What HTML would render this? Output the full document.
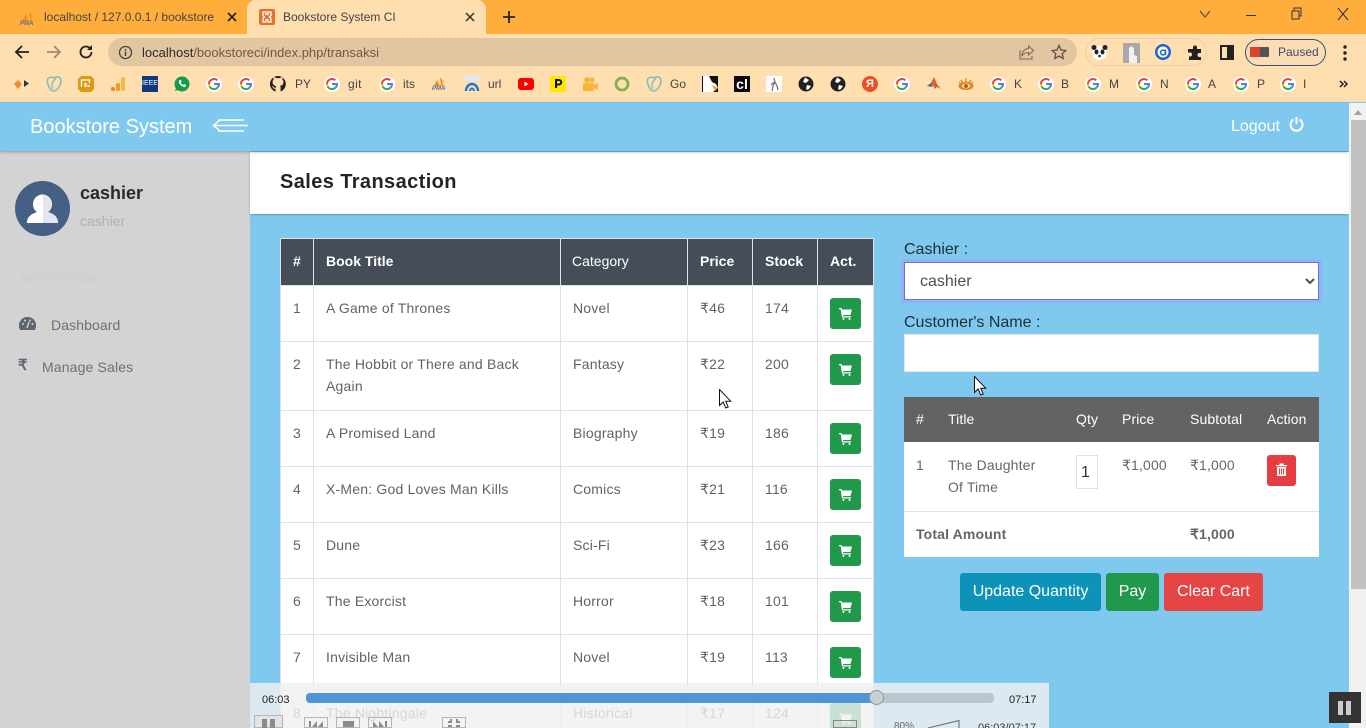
<!DOCTYPE html>
<html><head><meta charset="utf-8"><title>Bookstore System CI</title>
<style>
html,body{margin:0;padding:0;width:1366px;height:728px;overflow:hidden;background:#80c9ee;font-family:"Liberation Sans",Arial,sans-serif;font-size:14px;color:#555}
*{box-sizing:border-box}
#root{position:absolute;left:0;top:0;width:1366px;height:728px;overflow:hidden}
.a{position:absolute}
svg{display:block}
.bm{position:absolute;top:76px;width:16px;height:16px}
.bt{position:absolute;top:77px;font-size:12px;line-height:14px;color:#444}
table{border-collapse:collapse;table-layout:fixed}
#t1{position:absolute;left:280px;top:238px;width:593px;background:#fff}
#t1 th{background:#454d58;color:#fff;border:1px solid #dee2e6;height:47px;padding:0 12px 2px;text-align:left;font-size:14px;line-height:20px}
#t1 th.n{font-weight:normal;padding-left:11px}
#t1 td{border:1px solid #dee2e6;padding:11px 12px 0;vertical-align:top;line-height:22px;color:#5f6368;height:56px;letter-spacing:.2px}
#t1 tr.tall td{height:69px}
.cart{position:absolute;width:31px;height:31px;border-radius:3px;background:#20994b;left:830px}
.cart svg{margin:9px 0 0 9px}
#t2{position:absolute;left:904px;top:397px;width:415px;background:#fff}
#t2 th{background:#636363;color:#fff;font-weight:normal;text-align:left;height:45px;padding:0 0 2px 12px;font-size:14px;letter-spacing:.1px}
#t2 td{padding:12px 0 0 12px;vertical-align:top;line-height:22px;color:#666;letter-spacing:.15px}
.btn{position:absolute;top:573px;height:38px;border-radius:3px;color:#fff;font-size:16px;line-height:38px;text-align:center}
.pc{position:absolute;top:717px;width:24px;height:11px;border:1px solid #b5b5b5}
</style></head><body><div id="root">

<!-- tab strip -->
<div class="a" style="left:0;top:0;width:1366px;height:34px;background:#ffad3b"></div>
<svg class="a" style="left:20px;top:11px" width="17" height="11" viewBox="0 0 17 11"><path d="M9 0l1.500 10h5zM6 3L2 10h6zM11 2l4 8h-3z" fill="#f29111"/></svg>
<div class="a" style="left:20px;top:21px;font-size:6px;line-height:6px;font-weight:bold;font-style:italic;color:#5c6a94">PMA</div>
<div class="a" style="left:44px;top:10px;font-size:12px;line-height:14px;color:#444;width:172px;white-space:nowrap;overflow:hidden">localhost / 127.0.0.1 / bookstore</div>
<svg class="a" style="left:227px;top:12px" width="10" height="10" viewBox="0 0 10 10"><path d="M1 1l8 8M9 1l-8 8" stroke="#222" stroke-width="1.600"/></svg>
<div class="a" style="left:247px;top:0;width:239px;height:34px;background:#ffdeb0;border-radius:9px 9px 0 0"></div>
<svg class="a" style="left:259px;top:9px" width="16" height="16" viewBox="0 0 16 16"><rect width="16" height="16" rx="2" fill="#e8702a"/><path d="M4 3h3v2.500h2V3h3v3.500L10.500 8 12 9.500V13H9v-2.500H7V13H4V9.500L5.500 8 4 6.500z" fill="none" stroke="#fff" stroke-width="1.300"/></svg>
<div class="a" style="left:283px;top:10px;font-size:12px;line-height:14px;color:#444">Bookstore System CI</div>
<svg class="a" style="left:465px;top:12px" width="10" height="10" viewBox="0 0 10 10"><path d="M1 1l8 8M9 1l-8 8" stroke="#333" stroke-width="1.500"/></svg>
<svg class="a" style="left:503px;top:11px" width="12" height="12" viewBox="0 0 12 12"><path d="M6 0v12M0 6h12" stroke="#222" stroke-width="1.800"/></svg>
<svg class="a" style="left:1199px;top:10px" width="12" height="8" viewBox="0 0 12 8"><path d="M1 1l5 6 5-6" fill="none" stroke="#444"/></svg>
<svg class="a" style="left:1246px;top:7px" width="110" height="14" viewBox="0 0 110 14"><path d="M0 8.500h10" stroke="#333"/><path d="M46 4h7v8h-7zM48 4V1h7v8h-2" fill="none" stroke="#333"/><path d="M92 1l10 12M102 1L92 13" stroke="#333"/></svg>

<!-- toolbar -->
<div class="a" style="left:0;top:34px;width:1366px;height:68px;background:#ffdeb0"></div>
<svg class="a" style="left:13px;top:44px" width="18" height="16" viewBox="0 0 18 16"><path d="M16 8H3M9 2L3 8l6 6" fill="none" stroke="#222" stroke-width="1.800"/></svg>
<svg class="a" style="left:45px;top:44px" width="18" height="16" viewBox="0 0 18 16"><path d="M2 8h13M9 2l6 6-6 6" fill="none" stroke="#a08a70" stroke-width="1.800"/></svg>
<svg class="a" style="left:78px;top:44px" width="16" height="16" viewBox="0 0 16 16"><path d="M13.500 8A5.500 5.500 0 1 1 12 4.200" fill="none" stroke="#222" stroke-width="1.800"/><path d="M14 1v5H9z" fill="#222"/></svg>
<div class="a" style="left:108px;top:38px;width:969px;height:28px;border-radius:14px;background:#e2c6a2"></div>
<svg class="a" style="left:118px;top:45px" width="15" height="15" viewBox="0 0 15 15"><circle cx="7.500" cy="7.500" r="6" fill="none" stroke="#444" stroke-width="1.300"/><path d="M7.500 6.500v4.500M7.500 4v1.500" stroke="#444" stroke-width="1.500"/></svg>
<div class="a" style="left:142px;top:45px;font-size:13px;line-height:15px;color:#6b5a45;white-space:nowrap"><span style="color:#2b2b2b">localhost</span>/bookstoreci/index.php/transaksi</div>
<svg class="a" style="left:1019px;top:44px" width="16" height="16" viewBox="0 0 16 16"><path d="M9.500 2l5 4.500-5 4.500V8.500C6 8.500 4 10 3 12c0-4 2-7 6.500-7.500zM1 6v9h12v-3" fill="none" stroke="#7a6a58" stroke-width="1.100"/></svg>
<svg class="a" style="left:1051px;top:44px" width="16" height="16" viewBox="0 0 16 16"><path d="M8 1.500l2 4.500 4.800.5-3.600 3.200 1 4.800L8 12.100l-4.200 2.400 1-4.800L1.200 6.500 6 6z" fill="none" stroke="#5a4f44" stroke-width="1.300"/></svg>
<div class="a" style="left:1085px;top:38px;width:122px;height:28px;border-radius:14px;border:1px solid #f0cfa0"></div>
<svg class="a" style="left:1091px;top:44px" width="17" height="17" viewBox="0 0 17 17"><circle cx="8.500" cy="9" r="7" fill="#fff"/><circle cx="3" cy="3.500" r="2.500" fill="#222"/><circle cx="14" cy="3.500" r="2.500" fill="#222"/><ellipse cx="5.500" cy="8" rx="2" ry="2.500" fill="#222"/><ellipse cx="11.500" cy="8" rx="2" ry="2.500" fill="#222"/><circle cx="8.500" cy="12" r="1.300" fill="#222"/></svg>
<svg class="a" style="left:1123px;top:43px" width="17" height="20" viewBox="0 0 17 20"><rect width="17" height="20" fill="#a8a8a8"/><path d="M6 20V6a2.500 2.500 0 0 1 5 0v6l3 1v7z" fill="#f2f2f5"/></svg>
<svg class="a" style="left:1155px;top:44px" width="16" height="16" viewBox="0 0 16 16"><circle cx="8" cy="8" r="8" fill="#1d66d6"/><circle cx="8" cy="8" r="5.500" fill="#fff"/><circle cx="8" cy="8.500" r="2.400" fill="none" stroke="#1d66d6" stroke-width="1.500"/><path d="M10.500 5.500v5.500" stroke="#1d66d6" stroke-width="1.500"/></svg>
<svg class="a" style="left:1187px;top:45px" width="16" height="16" viewBox="0 0 16 16"><path d="M6 2.500a2 2 0 0 1 4 0V4h4v4h-1.500a2 2 0 0 0 0 4H14v3H2v-3.500h1a2 2 0 0 0 0-4H1V4h5z" fill="#222"/></svg>
<svg class="a" style="left:1220px;top:45px" width="14" height="15" viewBox="0 0 14 15"><rect x="1" y="1" width="12" height="13" fill="none" stroke="#222" stroke-width="2"/><rect x="7" y="1" width="6" height="13" fill="#222"/></svg>
<div class="a" style="left:1245px;top:39px;width:81px;height:27px;border-radius:14px;border:1px solid #34507c;background:#fcdcb2"></div>
<div class="a" style="left:1250px;top:47px;width:19px;height:10px;background:#555;border-radius:1px"><div style="width:10px;height:10px;background:#d9442f"></div></div>
<div class="a" style="left:1278px;top:45px;font-size:12px;line-height:14px;color:#3a4d74">Paused</div>
<svg class="a" style="left:1343px;top:45px" width="4" height="16" viewBox="0 0 4 16"><circle cx="2" cy="2" r="1.700" fill="#222"/><circle cx="2" cy="8" r="1.700" fill="#222"/><circle cx="2" cy="14" r="1.700" fill="#222"/></svg>

<!-- bookmarks -->
<svg class="bm" style="left:14px" viewBox="0 0 16 16"><path d="M0 8l4-4 4 4-4 5z" fill="#f28a30"/><path d="M10 4l5 3.500-5 3.500z" fill="#1f3a44"/></svg>
<svg class="bm" style="left:46px" viewBox="0 0 16 16"><path d="M8 2C6 1 3.500 1 2 2.500 .5 5 2 11 5 14c1 1 2 1 3 1 4-1 7-6 7-10 0-2-1-3.500-3-4-1.500-.3-3 .3-4 1z" fill="none" stroke="#7fbcc0" stroke-width="1.500"/><path d="M10 3C6 5 5 9 7 13" fill="none" stroke="#7fbcc0" stroke-width="1.300"/></svg>
<svg class="bm" style="left:78px" viewBox="0 0 16 16"><path d="M3 0h10l3 3v10l-3 3H3l-3-3V3z" fill="#e09a12"/><path d="M3.500 11V4h8v3" fill="none" stroke="#fff" stroke-width="1.300"/><path d="M6.500 7h2v4h-2zM9.500 9h2v2h-2z" fill="#fff"/></svg>
<svg class="bm" style="left:110px" viewBox="0 0 16 16"><rect x="1" y="11" width="4" height="4" rx="1.500" fill="#ee8a22"/><rect x="6" y="7" width="4" height="8" rx="1.500" fill="#f39a28"/><rect x="11" y="1" width="4" height="14" rx="1.500" fill="#f9b83a"/></svg>
<div class="bm" style="left:142px;background:#10387f;color:#fff;font-size:7px;line-height:16px;text-align:center">IEEE</div>
<svg class="bm" style="left:174px" viewBox="0 0 16 16"><circle cx="8" cy="8" r="7.500" fill="#0f9d47"/><path d="M1 15l1.500-4.500 3 3z" fill="#0f9d47"/><path d="M5 4.500c-1 3 3 7 6.500 6.500l.5-2-2-1-1 1C8 8.500 7 7.500 6.800 6.500l1-.8-1-2z" fill="#fff"/></svg>
<svg class="bm" style="left:206px" viewBox="0 0 16 16"><circle cx="8" cy="8" r="8" fill="#fff"/><path d="M3 8a5 5 0 0 1 8.300-3.700" fill="none" stroke="#e94235" stroke-width="2"/><path d="M3 8a5 5 0 0 0 .6 2.400" fill="none" stroke="#fabb05" stroke-width="2"/><path d="M3.600 10.400a5 5 0 0 0 8 1.200" fill="none" stroke="#34a853" stroke-width="2"/><path d="M11.600 11.600A5 5 0 0 0 13 8H8" fill="none" stroke="#4285f4" stroke-width="2"/></svg>
<svg class="bm" style="left:238px" viewBox="0 0 16 16"><circle cx="8" cy="8" r="8" fill="#fff"/><path d="M3 8a5 5 0 0 1 8.300-3.700" fill="none" stroke="#e94235" stroke-width="2"/><path d="M3 8a5 5 0 0 0 .6 2.400" fill="none" stroke="#fabb05" stroke-width="2"/><path d="M3.600 10.400a5 5 0 0 0 8 1.200" fill="none" stroke="#34a853" stroke-width="2"/><path d="M11.600 11.600A5 5 0 0 0 13 8H8" fill="none" stroke="#4285f4" stroke-width="2"/></svg>
<svg class="bm" style="left:270px" viewBox="0 0 16 16"><path d="M8 0a8 8 0 0 0-2.500 15.600v-2.800c-2 .4-2.500-1-2.700-1.500-.3-.6-1-1-.4-1.200 1-.1 1.500 1 1.700 1.300 1 1.200 2 .8 1.500.4 0-.7.400-1.200.7-1.500C3.800 9.500 2.600 8.500 2.600 6c0-1 .4-2 1-2.500-.1-.3-.4-1.300.1-2.500 0 0 1 0 2.500 1.200a8 8 0 0 1 3.600 0C11.300 1 12.300 1 12.300 1c.5 1.200.2 2.200.1 2.500.6.600 1 1.500 1 2.500 0 2.500-1.300 3.500-3.500 3.800.4.300.7.900.7 1.800v3.900A8 8 0 0 0 8 0z" fill="#222"/></svg>
<div class="bt" style="left:295px">PY</div>
<svg class="bm" style="left:324px" viewBox="0 0 16 16"><circle cx="8" cy="8" r="8" fill="#fff"/><path d="M3 8a5 5 0 0 1 8.300-3.700" fill="none" stroke="#e94235" stroke-width="2"/><path d="M3 8a5 5 0 0 0 .6 2.400" fill="none" stroke="#fabb05" stroke-width="2"/><path d="M3.600 10.400a5 5 0 0 0 8 1.200" fill="none" stroke="#34a853" stroke-width="2"/><path d="M11.600 11.600A5 5 0 0 0 13 8H8" fill="none" stroke="#4285f4" stroke-width="2"/></svg>
<div class="bt" style="left:348px;letter-spacing:.4px">git</div>
<svg class="bm" style="left:379px" viewBox="0 0 16 16"><circle cx="8" cy="8" r="8" fill="#fff"/><path d="M3 8a5 5 0 0 1 8.300-3.700" fill="none" stroke="#e94235" stroke-width="2"/><path d="M3 8a5 5 0 0 0 .6 2.400" fill="none" stroke="#fabb05" stroke-width="2"/><path d="M3.600 10.400a5 5 0 0 0 8 1.200" fill="none" stroke="#34a853" stroke-width="2"/><path d="M11.600 11.600A5 5 0 0 0 13 8H8" fill="none" stroke="#4285f4" stroke-width="2"/></svg>
<div class="bt" style="left:403px">its</div>
<svg class="bm" style="left:432px" viewBox="0 0 16 16"><path d="M8 1l1 9h5zM5 4l-3 6h6zM10 3l4 7h-3z" fill="#f29111"/></svg>
<div class="a" style="left:432px;top:86px;font-size:6px;line-height:6px;font-weight:bold;font-style:italic;color:#5c6a94">PMA</div>
<svg class="bm" style="left:464px" viewBox="0 0 16 16"><rect width="16" height="5" fill="#e3e8ee"/><path d="M2 15a6 7 0 0 1 12 0" fill="none" stroke="#1d78d6" stroke-width="2.500"/><path d="M6 15a2 2.500 0 0 1 4 0" fill="none" stroke="#1d78d6" stroke-width="2"/></svg>
<div class="bt" style="left:488px">url</div>
<svg class="bm" style="left:518px" viewBox="0 0 16 16"><rect x="0" y="2" width="16" height="12" rx="3" fill="#f00"/><path d="M6.500 5.500v5l4-2.500z" fill="#fff"/></svg>
<svg class="bm" style="left:550px" viewBox="0 0 16 16"><rect width="16" height="16" fill="#ffe600"/><path d="M6 12V4h3a2 2 0 0 1 0 4.500H6" fill="none" stroke="#111" stroke-width="2"/></svg>
<svg class="bm" style="left:582px" viewBox="0 0 16 16"><circle cx="5" cy="4" r="3" fill="#f5b73a"/><circle cx="10" cy="4" r="2.500" fill="#f5b73a"/><rect x="1" y="7" width="11" height="8" rx="1" fill="#f5b73a"/><path d="M12 9l4-2v7l-4-2z" fill="#f5b73a"/></svg>
<svg class="bm" style="left:614px" viewBox="0 0 16 16"><circle cx="8" cy="8" r="6" fill="none" stroke="#7fb24a" stroke-width="2.800"/></svg>
<svg class="bm" style="left:646px" viewBox="0 0 16 16"><path d="M8 2C6 1 3.500 1 2 2.500 .5 5 2 11 5 14c1 1 2 1 3 1 4-1 7-6 7-10 0-2-1-3.500-3-4-1.500-.3-3 .3-4 1z" fill="none" stroke="#7fbcc0" stroke-width="1.500"/><path d="M10 3C6 5 5 9 7 13" fill="none" stroke="#7fbcc0" stroke-width="1.300"/></svg>
<div class="bt" style="left:670px">Go</div>
<svg class="bm" style="left:702px" viewBox="0 0 16 16"><rect width="16" height="16" fill="#111"/><path d="M1 0h6l3 6 4 2 2 4-5 4H1z" fill="#fff"/><path d="M10 9l6 3-3 3z" fill="#e8a020"/></svg>
<div class="bm" style="left:734px;background:#0a0a0a;color:#fff;font-size:14px;font-weight:bold;line-height:16px;text-align:center">cl</div>
<svg class="bm" style="left:766px" viewBox="0 0 16 16"><rect width="16" height="16" fill="#fff"/><path d="M8 2l1 4-2 4-1 5M9 6l2 4 1 4M8 6l-3 3" fill="none" stroke="#777" stroke-width="1.300"/></svg>
<svg class="bm" style="left:798px" viewBox="0 0 16 16"><circle cx="8" cy="8" r="7.500" fill="#222"/><path d="M7 1.500L11 4 8 7 5 6zM9 9l4 1-3 4-2-1z" fill="#fff"/></svg>
<svg class="bm" style="left:830px" viewBox="0 0 16 16"><circle cx="8" cy="8" r="7.500" fill="#222"/><path d="M7 1.500L11 4 8 7 5 6zM9 9l4 1-3 4-2-1z" fill="#fff"/></svg>
<div class="bm" style="left:862px;background:#f04e23;border-radius:50%;color:#fff;font-size:11px;font-weight:bold;line-height:16px;text-align:center">Я</div>
<svg class="bm" style="left:894px" viewBox="0 0 16 16"><circle cx="8" cy="8" r="8" fill="#fff"/><path d="M3 8a5 5 0 0 1 8.300-3.700" fill="none" stroke="#e94235" stroke-width="2"/><path d="M3 8a5 5 0 0 0 .6 2.400" fill="none" stroke="#fabb05" stroke-width="2"/><path d="M3.600 10.400a5 5 0 0 0 8 1.200" fill="none" stroke="#34a853" stroke-width="2"/><path d="M11.600 11.600A5 5 0 0 0 13 8H8" fill="none" stroke="#4285f4" stroke-width="2"/></svg>
<svg class="bm" style="left:926px" viewBox="0 0 16 16"><path d="M1 10l4-3 3-6 3 7 4 5-4-2-2 2-2-4z" fill="#d9622b"/><path d="M1 10l4-3 2 4z" fill="#3b6ea5"/></svg>
<svg class="bm" style="left:958px" viewBox="0 0 16 16"><ellipse cx="8" cy="10" rx="7.500" ry="4" fill="#e0851f"/><ellipse cx="8" cy="10" rx="4" ry="2.500" fill="#ffdeb0"/><circle cx="8" cy="10" r="2" fill="#c0581a"/><path d="M3 4l2 3M8 2v4M13 4l-2 3M1 6l2 2M15 6l-2 2" stroke="#e0851f" stroke-width="1.300"/></svg>
<svg class="bm" style="left:990px" viewBox="0 0 16 16"><circle cx="8" cy="8" r="8" fill="#fff"/><path d="M3 8a5 5 0 0 1 8.300-3.700" fill="none" stroke="#e94235" stroke-width="2"/><path d="M3 8a5 5 0 0 0 .6 2.400" fill="none" stroke="#fabb05" stroke-width="2"/><path d="M3.600 10.400a5 5 0 0 0 8 1.200" fill="none" stroke="#34a853" stroke-width="2"/><path d="M11.600 11.600A5 5 0 0 0 13 8H8" fill="none" stroke="#4285f4" stroke-width="2"/></svg>
<div class="bt" style="left:1014px">K</div>
<svg class="bm" style="left:1038px" viewBox="0 0 16 16"><circle cx="8" cy="8" r="8" fill="#fff"/><path d="M3 8a5 5 0 0 1 8.300-3.700" fill="none" stroke="#e94235" stroke-width="2"/><path d="M3 8a5 5 0 0 0 .6 2.400" fill="none" stroke="#fabb05" stroke-width="2"/><path d="M3.600 10.400a5 5 0 0 0 8 1.200" fill="none" stroke="#34a853" stroke-width="2"/><path d="M11.600 11.600A5 5 0 0 0 13 8H8" fill="none" stroke="#4285f4" stroke-width="2"/></svg>
<div class="bt" style="left:1061px">B</div>
<svg class="bm" style="left:1085px" viewBox="0 0 16 16"><circle cx="8" cy="8" r="8" fill="#fff"/><path d="M3 8a5 5 0 0 1 8.300-3.700" fill="none" stroke="#e94235" stroke-width="2"/><path d="M3 8a5 5 0 0 0 .6 2.400" fill="none" stroke="#fabb05" stroke-width="2"/><path d="M3.600 10.400a5 5 0 0 0 8 1.200" fill="none" stroke="#34a853" stroke-width="2"/><path d="M11.600 11.600A5 5 0 0 0 13 8H8" fill="none" stroke="#4285f4" stroke-width="2"/></svg>
<div class="bt" style="left:1109px">M</div>
<svg class="bm" style="left:1136px" viewBox="0 0 16 16"><circle cx="8" cy="8" r="8" fill="#fff"/><path d="M3 8a5 5 0 0 1 8.300-3.700" fill="none" stroke="#e94235" stroke-width="2"/><path d="M3 8a5 5 0 0 0 .6 2.400" fill="none" stroke="#fabb05" stroke-width="2"/><path d="M3.600 10.400a5 5 0 0 0 8 1.200" fill="none" stroke="#34a853" stroke-width="2"/><path d="M11.600 11.600A5 5 0 0 0 13 8H8" fill="none" stroke="#4285f4" stroke-width="2"/></svg>
<div class="bt" style="left:1160px">N</div>
<svg class="bm" style="left:1185px" viewBox="0 0 16 16"><circle cx="8" cy="8" r="8" fill="#fff"/><path d="M3 8a5 5 0 0 1 8.300-3.700" fill="none" stroke="#e94235" stroke-width="2"/><path d="M3 8a5 5 0 0 0 .6 2.400" fill="none" stroke="#fabb05" stroke-width="2"/><path d="M3.600 10.400a5 5 0 0 0 8 1.200" fill="none" stroke="#34a853" stroke-width="2"/><path d="M11.600 11.600A5 5 0 0 0 13 8H8" fill="none" stroke="#4285f4" stroke-width="2"/></svg>
<div class="bt" style="left:1208px">A</div>
<svg class="bm" style="left:1233px" viewBox="0 0 16 16"><circle cx="8" cy="8" r="8" fill="#fff"/><path d="M3 8a5 5 0 0 1 8.300-3.700" fill="none" stroke="#e94235" stroke-width="2"/><path d="M3 8a5 5 0 0 0 .6 2.400" fill="none" stroke="#fabb05" stroke-width="2"/><path d="M3.600 10.400a5 5 0 0 0 8 1.200" fill="none" stroke="#34a853" stroke-width="2"/><path d="M11.600 11.600A5 5 0 0 0 13 8H8" fill="none" stroke="#4285f4" stroke-width="2"/></svg>
<div class="bt" style="left:1257px">P</div>
<svg class="bm" style="left:1280px" viewBox="0 0 16 16"><circle cx="8" cy="8" r="8" fill="#fff"/><path d="M3 8a5 5 0 0 1 8.300-3.700" fill="none" stroke="#e94235" stroke-width="2"/><path d="M3 8a5 5 0 0 0 .6 2.400" fill="none" stroke="#fabb05" stroke-width="2"/><path d="M3.600 10.400a5 5 0 0 0 8 1.200" fill="none" stroke="#34a853" stroke-width="2"/><path d="M11.600 11.600A5 5 0 0 0 13 8H8" fill="none" stroke="#4285f4" stroke-width="2"/></svg>
<div class="bt" style="left:1303px">I</div>
<svg class="a" style="left:1339px;top:80px" width="9" height="8" viewBox="0 0 9 8"><path d="M1 1l3 3-3 3M5 1l3 3-3 3" fill="none" stroke="#222" stroke-width="1.500"/></svg>

<!-- page -->
<div class="a" style="left:0;top:102px;width:1349px;height:626px;background:#80c9ee"></div>
<div class="a" style="left:0;top:151px;width:250px;height:577px;background:#d3d3d3"></div>
<div class="a" style="left:250px;top:152px;width:1099px;height:62px;background:#fff;box-shadow:0 1px 2px rgba(60,100,130,.45)"></div>
<div class="a" style="left:0;top:103px;width:1349px;height:48px;background:#80c9ee;box-shadow:0 1px 3px rgba(0,0,0,.3)"></div>
<div class="a" style="left:30px;top:115px;font-size:20px;line-height:24px;color:#fff">Bookstore System</div>
<svg class="a" style="left:212px;top:116px" width="36" height="20" viewBox="0 0 36 20"><path d="M2 9.500h34M6 4h26M6 15h26" stroke="#fff" stroke-width="1.400"/><path d="M8 4L1.500 9.500 8 15" fill="none" stroke="#fff" stroke-width="1.400"/></svg>
<div class="a" style="left:1231px;top:117px;font-size:16px;line-height:19px;color:#fff">Logout</div>
<svg class="a" style="left:1289px;top:117px" width="15" height="15" viewBox="0 0 15 15"><path d="M4.500 2.500a6 6 0 1 0 6 0" fill="none" stroke="#fff" stroke-width="2"/><path d="M7.500 0v7" stroke="#fff" stroke-width="2"/></svg>

<!-- scrollbar -->
<div class="a" style="left:1349px;top:103px;width:17px;height:625px;background:#f1f1f1"></div>
<div class="a" style="left:1351px;top:120px;width:15px;height:469px;background:#c1c1c1"></div>
<svg class="a" style="left:1354px;top:110px" width="8" height="5" viewBox="0 0 8 5"><path d="M4 0l4 5H0z" fill="#a3a3a3"/></svg>

<!-- sidebar -->
<svg class="a" style="left:15px;top:181px" width="55" height="55" viewBox="0 0 55 55"><circle cx="27.500" cy="27.500" r="27.500" fill="#456084"/><path d="M12 42c0-7 5-9 10-11-3-2-4-5-4-8a9.500 9.500 0 0 1 19 0c0 3-1 6-4 8 5 2 10 4 10 11z" fill="#fff"/><path d="M28 13.500a9.500 9.500 0 0 1 9 9.500c0 3-1 6-4 8 5 2 10 4 10 11H28z" fill="#e3e6eb"/></svg>
<div class="a" style="left:80px;top:183px;font-size:18px;line-height:21px;font-weight:bold;color:#2a2a2a">cashier</div>
<div class="a" style="left:80px;top:213px;font-size:14px;line-height:16px;color:#b0b0b0">cashier</div>
<div class="a" style="left:20px;top:272px;font-size:12px;line-height:14px;color:#cdcdcd;letter-spacing:.5px">NAVIGATION</div>
<svg class="a" style="left:19px;top:317px" width="17" height="15" viewBox="0 0 17 15"><path d="M8.500 0a8.500 8.500 0 0 0-7.300 13h14.600A8.500 8.500 0 0 0 8.500 0z" fill="#5e6673"/><circle cx="4" cy="7" r="1" fill="#d3d3d3"/><circle cx="6" cy="3.500" r="1" fill="#d3d3d3"/><circle cx="11" cy="3.500" r="1" fill="#d3d3d3"/><circle cx="13.500" cy="7" r="1" fill="#d3d3d3"/><path d="M8 11l2-6" stroke="#d3d3d3" stroke-width="1.400"/></svg>
<div class="a" style="left:51px;top:317px;font-size:14px;line-height:16px;color:#6b7078;letter-spacing:.1px">Dashboard</div>
<div class="a" style="left:18px;top:357px;font-size:15px;line-height:17px;color:#5e6673;font-weight:bold">₹</div>
<div class="a" style="left:42px;top:359px;font-size:14px;line-height:16px;color:#6b7078;letter-spacing:.15px">Manage Sales</div>

<div class="a" style="left:280px;top:171px;font-size:20px;line-height:23px;font-weight:bold;color:#212529;letter-spacing:.4px">Sales Transaction</div>

<!-- books table -->
<table id="t1"><colgroup><col style="width:33px"><col style="width:247px"><col style="width:127px"><col style="width:65px"><col style="width:65px"><col style="width:56px"></colgroup>
<tr><th>#</th><th>Book Title</th><th class="n">Category</th><th>Price</th><th>Stock</th><th>Act.</th></tr>
<tr><td>1</td><td>A Game of Thrones</td><td>Novel</td><td>₹46</td><td>174</td><td></td></tr>
<tr class="tall"><td>2</td><td>The Hobbit or There and Back Again</td><td>Fantasy</td><td>₹22</td><td>200</td><td></td></tr>
<tr><td>3</td><td>A Promised Land</td><td>Biography</td><td>₹19</td><td>186</td><td></td></tr>
<tr><td>4</td><td>X-Men: God Loves Man Kills</td><td>Comics</td><td>₹21</td><td>116</td><td></td></tr>
<tr><td>5</td><td>Dune</td><td>Sci-Fi</td><td>₹23</td><td>166</td><td></td></tr>
<tr><td>6</td><td>The Exorcist</td><td>Horror</td><td>₹18</td><td>101</td><td></td></tr>
<tr><td>7</td><td>Invisible Man</td><td>Novel</td><td>₹19</td><td>113</td><td></td></tr>
<tr><td>8</td><td>The Nightingale</td><td>Historical</td><td>₹17</td><td>124</td><td></td></tr>
</table>
<div class="cart" style="top:298px"><svg width="13" height="13" viewBox="0 0 13 13"><path d="M0 1h2.500l.5 1.500h10L11.500 8H4l.3 1.300H12V10.500H3L1.700 2.300H0z" fill="#fff"/><circle cx="4.500" cy="12" r="1" fill="#fff"/><circle cx="10.500" cy="12" r="1" fill="#fff"/></svg></div>
<div class="cart" style="top:354px"><svg width="13" height="13" viewBox="0 0 13 13"><path d="M0 1h2.500l.5 1.500h10L11.500 8H4l.3 1.300H12V10.500H3L1.700 2.300H0z" fill="#fff"/><circle cx="4.500" cy="12" r="1" fill="#fff"/><circle cx="10.500" cy="12" r="1" fill="#fff"/></svg></div>
<div class="cart" style="top:423px"><svg width="13" height="13" viewBox="0 0 13 13"><path d="M0 1h2.500l.5 1.500h10L11.500 8H4l.3 1.300H12V10.500H3L1.700 2.300H0z" fill="#fff"/><circle cx="4.500" cy="12" r="1" fill="#fff"/><circle cx="10.500" cy="12" r="1" fill="#fff"/></svg></div>
<div class="cart" style="top:479px"><svg width="13" height="13" viewBox="0 0 13 13"><path d="M0 1h2.500l.5 1.500h10L11.500 8H4l.3 1.300H12V10.500H3L1.700 2.300H0z" fill="#fff"/><circle cx="4.500" cy="12" r="1" fill="#fff"/><circle cx="10.500" cy="12" r="1" fill="#fff"/></svg></div>
<div class="cart" style="top:535px"><svg width="13" height="13" viewBox="0 0 13 13"><path d="M0 1h2.500l.5 1.500h10L11.500 8H4l.3 1.300H12V10.500H3L1.700 2.300H0z" fill="#fff"/><circle cx="4.500" cy="12" r="1" fill="#fff"/><circle cx="10.500" cy="12" r="1" fill="#fff"/></svg></div>
<div class="cart" style="top:591px"><svg width="13" height="13" viewBox="0 0 13 13"><path d="M0 1h2.500l.5 1.500h10L11.500 8H4l.3 1.300H12V10.500H3L1.700 2.300H0z" fill="#fff"/><circle cx="4.500" cy="12" r="1" fill="#fff"/><circle cx="10.500" cy="12" r="1" fill="#fff"/></svg></div>
<div class="cart" style="top:647px"><svg width="13" height="13" viewBox="0 0 13 13"><path d="M0 1h2.500l.5 1.500h10L11.500 8H4l.3 1.300H12V10.500H3L1.700 2.300H0z" fill="#fff"/><circle cx="4.500" cy="12" r="1" fill="#fff"/><circle cx="10.500" cy="12" r="1" fill="#fff"/></svg></div>
<div class="cart" style="top:703px"><svg width="13" height="13" viewBox="0 0 13 13"><path d="M0 1h2.500l.5 1.500h10L11.500 8H4l.3 1.300H12V10.500H3L1.700 2.300H0z" fill="#fff"/><circle cx="4.500" cy="12" r="1" fill="#fff"/><circle cx="10.500" cy="12" r="1" fill="#fff"/></svg></div>

<!-- right form -->
<div class="a" style="left:904px;top:240px;font-size:16px;line-height:19px;color:#1f2d3a">Cashier :</div>
<select class="a" style="left:904px;top:262px;width:415px;height:38px;padding-left:11px;font:16px 'Liberation Sans',sans-serif;color:#495057;background:#fff;border:1px solid #6a70d6;box-shadow:0 0 0 3px #8fb4f5;border-radius:0;outline:none"><option>cashier</option></select>
<div class="a" style="left:904px;top:313px;font-size:16px;line-height:19px;color:#1f2d3a">Customer's Name :</div>
<input class="a" style="left:904px;top:334px;width:415px;height:38px;background:#fff;border:1px solid #e4e7ea;border-radius:0">

<table id="t2"><colgroup><col style="width:32px"><col style="width:128px"><col style="width:46px"><col style="width:68px"><col style="width:77px"><col style="width:64px"></colgroup>
<tr><th>#</th><th>Title</th><th>Qty</th><th>Price</th><th>Subtotal</th><th>Action</th></tr>
<tr style="height:69px"><td>1</td><td style="padding-right:20px">The Daughter Of Time</td><td></td><td>₹1,000</td><td>₹1,000</td><td></td></tr>
<tr style="height:46px"><td colspan="4" style="border-top:1px solid #dee2e6;font-weight:bold;padding-top:11px">Total Amount</td><td colspan="2" style="border-top:1px solid #dee2e6;font-weight:bold;padding-top:11px">₹1,000</td></tr>
</table>
<div class="a" style="left:1076px;top:455px;width:22px;height:34px;background:#fff;border:1px solid #dfe2e5;font-size:16px;line-height:33px;padding-left:4px;color:#333">1</div>
<div class="a" style="left:1267px;top:455px;width:29px;height:31px;background:#e53e42;border-radius:3px"><svg style="margin:8px 0 0 9px" width="11" height="13" viewBox="0 0 11 13"><path d="M0 2h11v1.300H0zM3.500 2V.500h4V2M1 4h9v9H1z" fill="#fff"/><path d="M3.500 5.500v6M5.500 5.500v6M7.500 5.500v6" stroke="#e53e42"/></svg></div>

<div class="btn" style="left:960px;width:141px;background:#0e93b8">Update Quantity</div>
<div class="btn" style="left:1106px;width:53px;background:#20994b">Pay</div>
<div class="btn" style="left:1164px;width:99px;background:#e64545">Clear Cart</div>

<!-- cursors -->
<svg class="a" style="left:719px;top:389px" width="13" height="20" viewBox="0 0 13 20"><path d="M.500.500v16l3.700-3.500 2.500 6 2.500-1-2.500-5.800h5z" fill="#fff" stroke="#111"/></svg>
<svg class="a" style="left:974px;top:376px" width="13" height="20" viewBox="0 0 13 20"><path d="M.500.500v16l3.700-3.500 2.500 6 2.500-1-2.500-5.800h5z" fill="#fff" stroke="#111"/></svg>

<!-- video player overlay -->
<div class="a" style="left:250px;top:683px;width:799px;height:45px;background:rgba(240,240,240,.82)"></div>
<div class="a" style="left:262px;top:694px;font-size:11px;line-height:13px;color:#222">06:03</div>
<div class="a" style="left:1009px;top:694px;font-size:11px;line-height:13px;color:#222">07:17</div>
<div class="a" style="left:306px;top:693px;width:688px;height:10px;border-radius:4px;background:#b9c6cd"></div>
<div class="a" style="left:306px;top:693px;width:570px;height:10px;border-radius:4px 0 0 4px;background:#4f96d8"></div>
<div class="a" style="left:869px;top:690px;width:15px;height:15px;border-radius:50%;background:#c6d0d6;border:1px solid #8b979e"></div>
<div class="a" style="left:254px;top:715px;width:29px;height:13px;border:1px solid #b5b5b5;background:#e4e4e4"><div style="position:absolute;left:7px;top:3px;width:5px;height:10px;background:#8a8a8a"></div><div style="position:absolute;left:15px;top:3px;width:5px;height:10px;background:#8a8a8a"></div></div>
<div class="pc" style="left:304px"><svg width="22" height="9" viewBox="0 0 22 9"><path d="M4 3h2v6H4zM12 3v6L7 9zM18 3v6l-5 0z" fill="#8a8a8a"/></svg></div>
<div class="pc" style="left:336px"><div style="position:absolute;left:6px;top:3px;width:11px;height:6px;background:#8a8a8a"></div></div>
<div class="pc" style="left:368px"><svg width="22" height="9" viewBox="0 0 22 9"><path d="M4 3v6l5 0zM10 3v6l5 0zM16 3h2v6h-2z" fill="#8a8a8a"/></svg></div>
<div class="pc" style="left:442px"><svg width="22" height="9" viewBox="0 0 22 9"><path d="M5 5h4V1H7v2H5zM13 1h2v2h2v2h-4zM5 7h4v2H5zM13 7h4v2h-4z" fill="#8a8a8a"/></svg></div>
<div class="a" style="left:833px;top:720px;width:24px;height:8px;border:1px solid #888"></div>
<div class="a" style="left:894px;top:721px;font-size:10px;line-height:12px;color:#666">80%</div>
<svg class="a" style="left:928px;top:720px" width="33" height="8" viewBox="0 0 33 8"><path d="M0 8L31 .500V8" fill="none" stroke="#666"/></svg>
<div class="a" style="left:978px;top:722px;font-size:11px;line-height:13px;color:#333">06:03/07:17</div>

<div class="a" style="left:1329px;top:692px;width:32px;height:31px;background:#333"><div style="position:absolute;left:9px;top:9px;width:5px;height:14px;background:#ccc"></div><div style="position:absolute;left:17px;top:9px;width:5px;height:14px;background:#ccc"></div></div>
</div></body></html>
